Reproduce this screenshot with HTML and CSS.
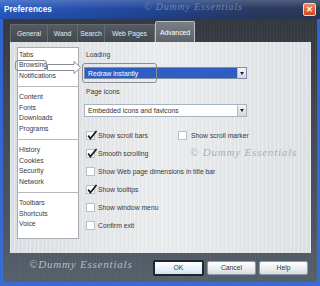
FILE: index.html
```html
<!DOCTYPE html>
<html lang="en">
<head>
    <meta charset="UTF-8">
    <meta name="viewport" content="width=device-width, initial-scale=1.0">
    <title>Preferences</title>
    <link rel="stylesheet" href="styles.css">
</head>
<body>
    <div class="window">
        <div class="titlebar">
            <span class="title">Preferences</span>
            <span class="wm wm-title">© Dummy Essentials</span>
            <span class="close">✕</span>
        </div>
        <div class="frame">
            <div class="tabs">
                <div class="tab tab-general">General</div>
                <div class="tab tab-wand">Wand</div>
                <div class="tab tab-search">Search</div>
                <div class="tab tab-web">Web Pages</div>
                <div class="tab tab-advanced active">Advanced</div>
            </div>

            <div class="panel">
                <div class="sections">
                    <div class="group">
                        <div class="item">Tabs</div>
                        <div class="item">Browsing</div>
                        <div class="item">Notifications</div>
                    </div>
                    <div class="group">
                        <div class="item">Content</div>
                        <div class="item">Fonts</div>
                        <div class="item">Downloads</div>
                        <div class="item">Programs</div>
                    </div>
                    <div class="group">
                        <div class="item">History</div>
                        <div class="item">Cookies</div>
                        <div class="item">Security</div>
                        <div class="item">Network</div>
                    </div>
                    <div class="group">
                        <div class="item">Toolbars</div>
                        <div class="item">Shortcuts</div>
                        <div class="item">Voice</div>
                    </div>
                </div>

                <div class="options">
                    <div class="label">Loading</div>
                    <div class="select selected">
                        <span>Redraw instantly</span>
                        <span class="arrow"></span>
                    </div>
                    <div class="label label-second">Page icons</div>
                    <div class="select">
                        <span>Embedded icons and favicons</span>
                        <span class="arrow"></span>
                    </div>

                    <div class="checks">
                        <label class="check"><span class="box on"><svg viewBox="0 0 9 9"><polyline points="1.8,4.6 3.6,7 8.6,0.8"/></svg></span>Show scroll bars</label>
                        <label class="check"><span class="box"></span>Show scroll marker</label>
                        <label class="check wide"><span class="box on"><svg viewBox="0 0 9 9"><polyline points="1.8,4.6 3.6,7 8.6,0.8"/></svg></span>Smooth scrolling</label>
                        <label class="check wide"><span class="box"></span>Show Web page dimensions in title bar</label>
                        <label class="check wide"><span class="box on"><svg viewBox="0 0 9 9"><polyline points="1.8,4.6 3.6,7 8.6,0.8"/></svg></span>Show tooltips</label>
                        <label class="check wide"><span class="box"></span>Show window menu</label>
                        <label class="check wide"><span class="box"></span>Confirm exit</label>
                    </div>
                </div>

                <!-- callout marks drawn over the dialog -->
                <div class="callout callout-list"></div>
                <svg class="pointer" viewBox="0 0 34 13">
                    <polygon points="0.5,3.5 27,3.5 27,0.5 33.5,6.5 27,12.5 27,9.5 0.5,9.5"/>
                </svg>
                <div class="callout callout-select"></div>
                <span class="wm wm-panel">© Dummy Essentials</span>
            </div>

            <div class="footer">
                <span class="wm wm-footer">©Dummy Essentials</span>
                <button class="btn default">OK</button>
                <button class="btn">Cancel</button>
                <button class="btn">Help</button>
            </div>
        </div>
    </div>
</body>
</html>
```

FILE: styles.css
```css
body {
    margin: 0;
    font-family: "Liberation Sans", Arial, sans-serif;
    font-size: 6.8px;
    color: #333;
}
.window {
    width: 320px;
    height: 286px;
    display: flex;
    flex-direction: column;
    background: linear-gradient(#2f62cc, #3a6dd2);
}
.titlebar {
    height: 19px;
    flex: none;
    position: relative;
    display: flex;
    align-items: center;
    padding: 0 4px;
    background:
        linear-gradient(rgba(255,255,255,0.18), rgba(255,255,255,0) 45%, rgba(0,0,0,0.12)),
        linear-gradient(to right, #2a5cc4, #23479a 45%, #2a3b62 80%, #2c3a5c);
}
.title {
    color: #fff;
    font-weight: bold;
    font-size: 8.2px;
    letter-spacing: 0.1px;
}
.close {
    margin-left: auto;
    width: 11px;
    height: 11px;
    border: 1px solid #f4d8cc;
    border-radius: 2px;
    background: linear-gradient(#ec8a62, #d2451c);
    color: #fff;
    font-size: 8px;
    font-weight: bold;
    line-height: 11px;
    text-align: center;
}
.wm {
    position: absolute;
    font-family: "Liberation Serif", serif;
    font-style: italic;
    letter-spacing: 0.8px;
    white-space: nowrap;
}
.wm-title {
    left: 144px;
    top: 1px;
    font-size: 10px;
    color: #6d82aa;
}
.frame {
    flex: 1;
    margin: 0 3px 4px;
    display: flex;
    flex-direction: column;
    background:
        repeating-linear-gradient(90deg, rgba(255,255,255,0.03) 0 1px, rgba(0,0,0,0) 1px 3px),
        linear-gradient(#33383f, #3f454d 30%, #4c555f 80%, #56606b);
}
.tabs {
    display: flex;
    align-items: flex-end;
    height: 23px;
    flex: none;
    padding-left: 7px;
}
.tab {
    height: 18px;
    box-sizing: border-box;
    display: flex;
    align-items: center;
    justify-content: center;
    border: 1px solid #656b73;
    border-bottom: none;
    margin-right: -1px;
    background: linear-gradient(#555a62, #444950);
    color: #e6e8ea;
}
.tab-general { width: 38px; }
.tab-wand { width: 31px; }
.tab-search { width: 28px; }
.tab-web { width: 51px; }
.tab-advanced { width: 40px; }
.tab.active {
    height: 21px;
    margin-left: 1px;
    border-color: #b9bec4;
    border-radius: 2px 2px 0 0;
    background: linear-gradient(#7a7f86, #5d636a);
    color: #fff;
}
.panel {
    height: 211px;
    box-sizing: border-box;
    margin: 0 6px 0 7px;
    padding: 5px 7px;
    display: flex;
    gap: 5px;
    position: relative;
    background:
        repeating-linear-gradient(90deg, rgba(255,255,255,0.35) 0 1px, rgba(255,255,255,0) 1px 4px),
        linear-gradient(to right, #dadde1, #e8eaec 50%, #dcdfe3);
}
.sections {
    width: 62px;
    height: 192px;
    box-sizing: border-box;
    flex: none;
    border: 1px solid #a9adb3;
    background: #fff;
}
.group {
    padding: 5px 0 5px 1px;
    border-top: 1px solid #b6babf;
}
.group:first-child {
    padding-top: 1.5px;
    border-top: none;
}
.item {
    line-height: 10.5px;
    color: #3a3a3a;
}
.options {
    flex: 1;
    display: flex;
    flex-direction: column;
    padding-top: 3px;
}
.label {
    line-height: 10px;
    padding-left: 2px;
    color: #3a3a3a;
}
.label-second {
    margin-top: 8px;
}
.select {
    width: 163px;
    height: 12px;
    box-sizing: border-box;
    margin-top: 7px;
    border: 1px solid #a6b3c2;
    background: #fff;
    display: flex;
    align-items: center;
    padding-left: 3px;
    color: #333;
}
.select + .label + .select {
    height: 13px;
}
.select.selected {
    background: #2f5ec2;
    border-color: #7f8fa8;
    color: #fff;
}
.arrow {
    margin-left: auto;
    width: 9px;
    height: 100%;
    box-sizing: border-box;
    border-left: 1px solid #b6bcc4;
    background: linear-gradient(#f6f7f8, #d2d6db);
    position: relative;
}
.arrow::after {
    content: "";
    position: absolute;
    left: 2px;
    top: 4px;
    border-left: 2.5px solid transparent;
    border-right: 2.5px solid transparent;
    border-top: 3px solid #222;
}
.checks {
    margin-top: 9px;
    display: grid;
    grid-template-columns: 92px 1fr;
    padding-left: 2px;
}
.check {
    height: 18px;
    display: flex;
    align-items: center;
    gap: 3px;
    color: #3a3a3a;
}
.check.wide {
    grid-column: 1 / span 2;
}
.box {
    width: 9px;
    height: 9px;
    box-sizing: border-box;
    border: 1px solid #bcc0c6;
    background: #fff;
    flex: none;
    position: relative;
}
.box svg {
    position: absolute;
    left: -1px;
    top: -1.5px;
    width: 11px;
    height: 11px;
    fill: none;
    stroke: #1c1c1c;
    stroke-width: 1.4;
}
.checks .check:nth-child(2) .box {
    margin-right: 1px;
}
.callout {
    position: absolute;
    border: 1px solid #8a8e94;
    border-radius: 3px;
}
.callout-list {
    left: 5px;
    top: 18px;
    width: 30px;
    height: 9px;
}
.callout-select {
    left: 72px;
    top: 21px;
    width: 73px;
    height: 18px;
}
.pointer {
    position: absolute;
    left: 37px;
    top: 19px;
    width: 34px;
    height: 13px;
    fill: #fff;
    stroke: #8a8e94;
    stroke-width: 1;
}
.wm-panel {
    left: 180px;
    top: 104px;
    font-size: 11px;
    color: #a9aeb4;
}
.footer {
    flex: 1;
    display: flex;
    align-items: center;
    justify-content: flex-end;
    gap: 3px;
    padding-right: 9px;
    position: relative;
}
.wm-footer {
    left: 26px;
    top: 5px;
    font-size: 11px;
    color: #b7bdc5;
}
.btn {
    width: 49px;
    height: 14px;
    box-sizing: border-box;
    border: 1px solid #8e99a6;
    border-radius: 2px;
    background: linear-gradient(#ffffff, #e9ebee 60%, #d9dce0);
    font-family: "Liberation Sans", Arial, sans-serif;
    font-size: 6.8px;
    color: #3a3a3a;
    padding: 0;
}
.btn.default {
    width: 51px;
    height: 16px;
    border: 2px solid #1f2630;
    background: linear-gradient(#ffffff, #e6f1fb 60%, #cfe3f6);
}
```
